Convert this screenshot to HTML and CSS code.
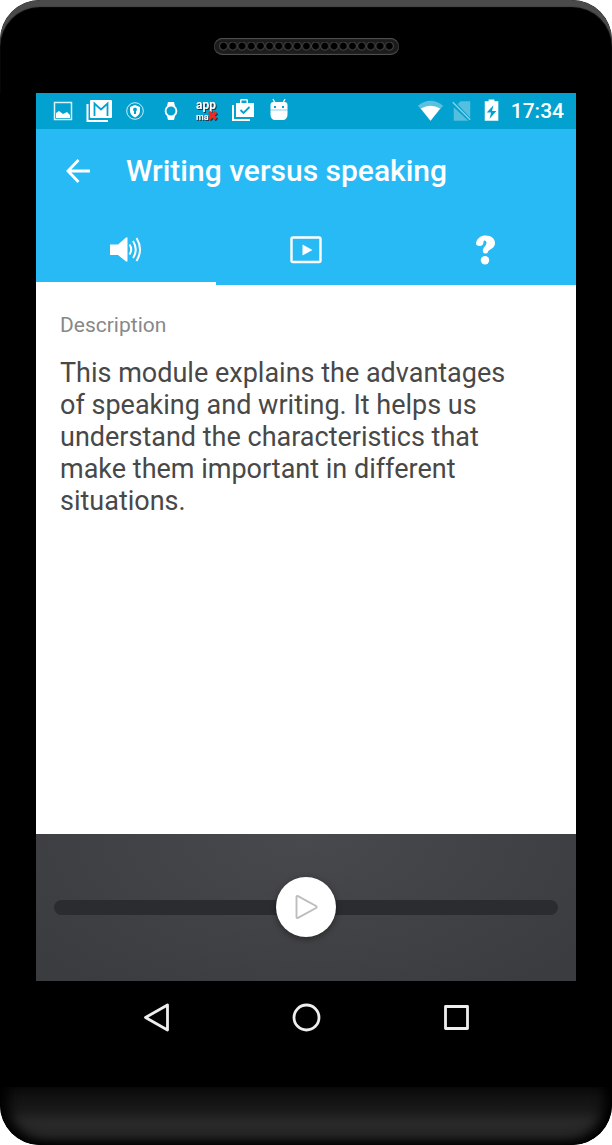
FILE: index.html
```html
<!DOCTYPE html>
<html lang="en">
<head>
<meta charset="utf-8">
<meta name="viewport" content="width=device-width, initial-scale=1">
<title>Writing versus speaking</title>
<link rel="stylesheet" href="styles.css">
</head>
<body>
<div class="phone">
  <div class="bezel-top"><div class="speaker"><div class="speaker-holes"></div></div></div>
  <div class="screen">
    <div class="status-bar">
      <div class="notifications">
        <svg class="status-icon" viewBox="0 0 36 36"><path d="M9.500 9.500h17v17h-17z" fill="none" stroke="#fff" stroke-width="1.500" opacity=".85"/><path d="M11 25v-5l3-2 4 3 4-2 3 3v3z" fill="#fff"/></svg>
        <svg class="status-icon" viewBox="0 0 36 36"><path d="M6.500 11v17H27" fill="none" stroke="#fff" stroke-width="2"/><path fill="#fff" d="M10 7h20a1 1 0 0 1 1 1v16a1 1 0 0 1-1 1H10a1 1 0 0 1-1-1V8a1 1 0 0 1 1-1z"/><path d="M13.500 23V10.500l6.500 6 6.500-6V23" fill="none" stroke="#03a1cf" stroke-width="1.800"/></svg>
        <svg class="status-icon" viewBox="0 0 36 36"><circle cx="18" cy="18" r="8.300" fill="none" stroke="#fff" opacity=".8"/><path fill="#fff" fill-rule="evenodd" d="M18 12l5 2v4c0 3-2 5-5 6.500-3-1.500-5-3.500-5-6.500v-4zm0 2.500a2 2 0 0 0-1 3.700V21h2v-2.800a2 2 0 0 0-1-3.700z"/></svg>
        <svg class="status-icon" viewBox="0 0 36 36"><path fill="#fff" fill-rule="evenodd" d="M15 9h6l1 4a6.500 6.500 0 0 1 0 10l-1 4h-6l-1-4a6.500 6.500 0 0 1 0-10zm3 4.500a4.500 4.500 0 1 0 0 9 4.500 4.500 0 0 0 0-9z"/></svg>
        <svg class="status-icon badge" viewBox="0 0 36 36"><text class="badge-top" x="7" y="16">app</text><text class="badge-bottom" x="7" y="27">ma</text><path d="M20 19l7 7m0-7l-7 7" stroke="#f02a20" stroke-width="3.200"/></svg>
        <svg class="status-icon" viewBox="0 0 36 36"><path d="M8 12v15h17" fill="none" stroke="#fff" stroke-width="2"/><path fill="#fff" fill-rule="evenodd" d="M15 10V7l1-1h6l1 1v3h6v14H11V10zm1.500 0h5V7.500h-5z"/><path d="M15.500 17l3 3 6-6" fill="none" stroke="#03a1cf" stroke-width="1.800"/></svg>
        <svg class="status-icon" viewBox="0 0 36 36"><path d="M12 6l2 4m10-4l-2 4" stroke="#fff" stroke-width="1.300"/><path fill="#fff" d="M12.500 9h11a3 3 0 0 1 3 3v9c0 4-2 6-5 6h-7c-3 0-5-2-5-6v-9a3 3 0 0 1 3-3z"/><path d="M9.500 17h17" stroke="#03a1cf" stroke-width=".800" opacity=".6"/><path d="M13 14h2m6 0h2" stroke="#03a1cf" stroke-width="2"/></svg>
      </div>
      <div class="system">
        <svg class="system-icon" viewBox="0 0 32 36"><path d="M3 12.500Q16 2.500 29 12.500L16 28z" fill="#fff" opacity=".35"/><path d="M6 15.500Q16 9.500 26 15.500L16 28z" fill="#fff"/></svg>
        <svg class="system-icon" viewBox="0 0 32 36"><path d="M12 11l3-3h10v17zM8 14l15 14H8z" fill="#fff" opacity=".32"/><path d="M7 9l18 18" stroke="#fff" stroke-width="1.500" opacity=".5"/></svg>
        <svg class="system-icon" viewBox="0 0 32 36"><path fill="#fff" fill-rule="evenodd" d="M12 8V6h6v2h4v20H8V8zm5 4l-7 7.500h4.500L13 26l7-8h-4.500z"/></svg>
        <time class="clock">17:34</time>
      </div>
    </div>
    <header class="app-bar">
      <button class="back" aria-label="Back"><svg viewBox="0 0 26 26" width="26" height="26"><path d="M13.500 2L3 13l10.500 11M3 13h22" fill="none" stroke="#fff" stroke-width="2.800"/></svg></button>
      <h1 class="title">Writing versus speaking</h1>
    </header>
    <div class="tabs" role="tablist">
      <button class="tab tab-active" role="tab" aria-selected="true" aria-label="Audio"><svg viewBox="0 0 32 30" width="32" height="30"><path d="M0 9.500h8l8-7h1.500v24H16l-8-6.500H0z" fill="#fff"/><path d="M19.500 9.500q3.500 5 0 10M23 6q5.500 8.500 0 17M26.500 3q7 11.500 0 23" fill="none" stroke="#fff" stroke-width="2"/></svg></button>
      <button class="tab" role="tab" aria-selected="false" aria-label="Video"><svg viewBox="0 0 32 30" width="32" height="30"><rect x="1.500" y="2.500" width="29" height="24.500" rx="1.500" fill="none" stroke="#fff" stroke-width="2.400"/><path d="M12.500 9.500l10 5.500-10 5.500z" fill="#fff"/></svg></button>
      <button class="tab" role="tab" aria-selected="false" aria-label="Quiz"><svg viewBox="0 0 32 30" width="32" height="30"><path d="M6 8C7 3 11 .500 15.500 .500c6 0 9.500 3.500 9.500 7.500 0 4-3 5.500-5.500 7-2 1-1 3.500-4 3.500-2.500 0-3-2-2.500-4 .500-2.500 3.500-4 3.500-6.500 0-3-3-3.500-3-1 0 2-1 4-4 4-2 0-3.800-1.200-3.500-3z" fill="#fff"/><circle cx="15" cy="25.200" r="4.200" fill="#fff"/></svg></button>
    </div>
    <main class="content">
      <h2 class="label">Description</h2>
      <p class="description">This module explains the advantages of speaking and writing. It helps us understand the characteristics that make them important in different situations.</p>
    </main>
    <div class="player">
      <input class="seek" type="range" min="0" max="100" value="50" aria-label="Playback position">
      <button class="play" aria-label="Play"><svg viewBox="0 0 24 26" width="24" height="26"><path d="M2.500 3v20q0 1.500 1.500 .800l18-9.800q1.300-1 0-2L4 2.200Q2.500 1.500 2.500 3z" fill="none" stroke="#bdbdbd" stroke-width="1.900"/></svg></button>
    </div>
  </div>
  <nav class="nav-bar">
    <button class="nav-button" aria-label="Back"><svg viewBox="0 0 30 30" width="30" height="30"><path d="M26.500 3v25L4.500 15.500z" fill="none" stroke="#eee" stroke-width="2.800" stroke-linejoin="round"/></svg></button>
    <button class="nav-button" aria-label="Home"><svg viewBox="0 0 30 30" width="30" height="30"><circle cx="15.500" cy="15.500" r="12.500" fill="none" stroke="#eee" stroke-width="2.800"/></svg></button>
    <button class="nav-button" aria-label="Recent apps"><svg viewBox="0 0 30 30" width="30" height="30"><rect x="4.500" y="4.500" width="22" height="22" fill="none" stroke="#eee" stroke-width="2.800" stroke-linejoin="round"/></svg></button>
  </nav>
  <div class="chin"></div>
</div>
</body>
</html>
```
FILE: styles.css
```css
* { box-sizing: border-box; }
body { margin: 0; background: #fff; font-family: Roboto, "Noto Sans", sans-serif; }
button { margin: 0; padding: 0; border: 0; background: none; display: flex; align-items: center; justify-content: center; cursor: pointer; }
svg { display: block; }

.phone { display: flex; flex-direction: column; min-height: 100vh; background: #000; border-radius: 40px; overflow: hidden; }
.bezel-top { height: 93px; padding-top: 38px; display: flex; justify-content: center; align-items: flex-start; border-radius: 40px 40px 0 0; box-shadow: inset 0 7px 1px #4a4a4a; }
.speaker { width: 185px; height: 17px; padding: 4px 5px; border-radius: 9px; background: #1c1c1c; box-shadow: inset 0 1px 1px #555, inset 0 -1px 1px #555; }
.speaker-holes { height: 9px; background: radial-gradient(circle at 50% 45%, #000 3px, #444 4px, transparent 5px) 0 0 / 9px 9px round; }

.screen { flex: 1; display: flex; flex-direction: column; margin: 0 36px; background: #fff; }
.status-bar { height: 36px; padding: 0 12px 0 9px; display: flex; justify-content: space-between; background: #03a1cf; color: #fff; }
.notifications, .system { display: flex; align-items: center; }
.status-icon { width: 36px; height: 36px; }
.system-icon { width: 31px; height: 36px; }
.clock { padding-left: 3px; font-size: 21px; font-weight: 500; line-height: 38px; }
.badge { fill: #fff; filter: drop-shadow(1px 1px 0 #234); }
.badge-top { font: bold 12px Roboto, sans-serif; }
.badge-bottom { font: bold 9px Roboto, sans-serif; }

.app-bar { height: 84px; padding: 0 28px; display: flex; align-items: center; gap: 34px; background: #28baf4; color: #fff; }
.back { width: 28px; height: 48px; }
.title { margin: 0; font-size: 30px; font-weight: 500; line-height: 36px; }
.tabs { display: grid; grid-template-columns: repeat(3, 1fr); height: 72px; background: #28baf4; }
.tab { padding-top: 4px; border-bottom: 3px solid transparent; }
.tab-active { border-bottom-color: #fff; }

.content { flex: 1; padding: 28px 48px 28px 24px; }
.label { margin: 0 0 20px; font-size: 21px; font-weight: 400; line-height: 24px; color: #888; }
.description { margin: 0; font-size: 27px; line-height: 32px; color: #484848; }

.player { position: relative; height: 147px; padding: 0 18px; display: flex; align-items: center; background: radial-gradient(ellipse at 50% 0, #48494c, #3b3c3f 90%); }
.seek { appearance: none; width: 100%; height: 15px; margin: 0; border-radius: 8px; background: #2b2c30; }
.seek::-webkit-slider-thumb { appearance: none; width: 60px; height: 15px; background: transparent; }
.play { position: absolute; inset: 0 0 1px; margin: auto; width: 60px; height: 60px; border-radius: 50%; background: #fff; box-shadow: 0 2px 6px rgba(0, 0, 0, .4); }

.nav-bar { height: 106px; padding-bottom: 34px; display: flex; justify-content: center; gap: 78px; }
.nav-button { width: 72px; height: 72px; }
.chin { height: 58px; border-radius: 0 0 40px 40px; background: linear-gradient(#0c0c0c, #191919 40%, #282828 60%, #282828); box-shadow: inset 10px -4px 12px -2px #000, inset -10px -4px 12px -2px #000; }
```
